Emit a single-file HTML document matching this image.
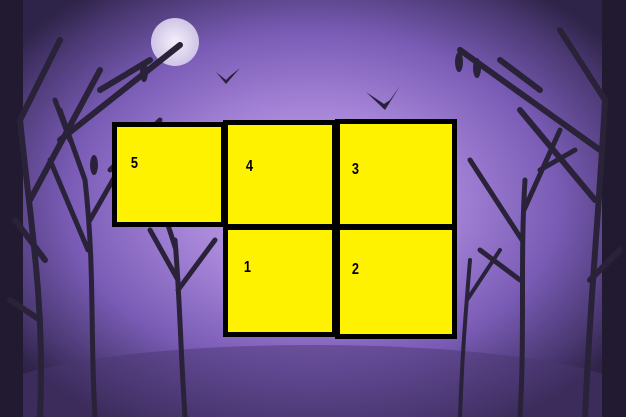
<!DOCTYPE html>
<html><head><meta charset="utf-8"><style>
html,body{margin:0;padding:0;width:626px;height:417px;overflow:hidden}
body{position:relative;background:radial-gradient(ellipse 60% 62% at 50% 48%,#c2a8e8 0%,#a685d8 35%,#7a5cb6 65%,#4a3872 88%,#2e2348 100%)}
.b{position:absolute;box-sizing:border-box;background:#fff200;border:5px solid #000}
.n{position:absolute;font:900 16px "Liberation Sans",sans-serif;color:#000;transform:scaleX(.8);line-height:16px}
svg{position:absolute;left:0;top:0;display:block}
</style></head><body>
<svg width="626" height="417" viewBox="0 0 626 417">
<defs><radialGradient id="m"><stop offset="0" stop-color="#f4f0fa"/><stop offset="1" stop-color="#cfc4e6"/></radialGradient></defs>
<ellipse cx="313" cy="400" rx="330" ry="55" fill="#4a3570" opacity=".5"/>
<circle cx="175" cy="42" r="24" fill="url(#m)"/>
<g stroke="#2a2238" fill="none" stroke-linecap="round">
<path d="M0 0V417M14 0V417" stroke-width="18" stroke="#221a30"/>
<path d="M40 417C45 300 30 220 20 120M30 200L100 70M60 140L180 45M100 90L150 60M20 120L60 40M45 260L15 220M40 320L10 300" stroke-width="6"/>
<path d="M95 417C90 330 95 270 85 180M88 250L50 160M90 220L130 150M85 180L60 110M110 170L160 120M70 140L55 100" stroke-width="5"/>
<path d="M185 417C180 340 180 300 175 240M178 280L150 230M178 290L215 240M176 250L160 200M160 220L140 210" stroke-width="5"/>
<path d="M612 0V417M626 0V417" stroke-width="20" stroke="#221a30"/>
<path d="M585 417C590 300 600 200 605 100M595 200L520 110M600 150L460 50M540 90L500 60M605 100L560 30M590 280L620 250" stroke-width="6"/>
<path d="M520 417C525 330 520 260 525 180M522 240L470 160M524 210L560 130M520 280L480 250M540 170L575 150" stroke-width="5"/>
<path d="M460 417C462 360 465 320 470 260M467 300L500 250" stroke-width="4"/>
</g>
<g fill="#2a2238">
<ellipse cx="144" cy="72" rx="4" ry="10"/><ellipse cx="94" cy="165" rx="4" ry="10"/>
<ellipse cx="459" cy="62" rx="4" ry="10"/><ellipse cx="477" cy="68" rx="4" ry="10"/>
<path d="M216 72L226 84L240 68L230 76L226 80Z"/><path d="M366 92L385 110L400 86L390 100L384 104Z"/>
</g>
</svg>
<div class="b" style="left:112px;top:122px;width:114px;height:105px"></div>
<div class="b" style="left:223px;top:120px;width:114px;height:109px"></div>
<div class="b" style="left:335px;top:119px;width:122px;height:110px"></div>
<div class="b" style="left:223px;top:225px;width:114px;height:112px"></div>
<div class="b" style="left:335px;top:225px;width:122px;height:114px"></div>
<div class="n" style="left:130px;top:156px">5</div>
<div class="n" style="left:245px;top:159px">4</div>
<div class="n" style="left:351px;top:162px">3</div>
<div class="n" style="left:243px;top:260px">1</div>
<div class="n" style="left:351px;top:262px">2</div>
</body></html>
